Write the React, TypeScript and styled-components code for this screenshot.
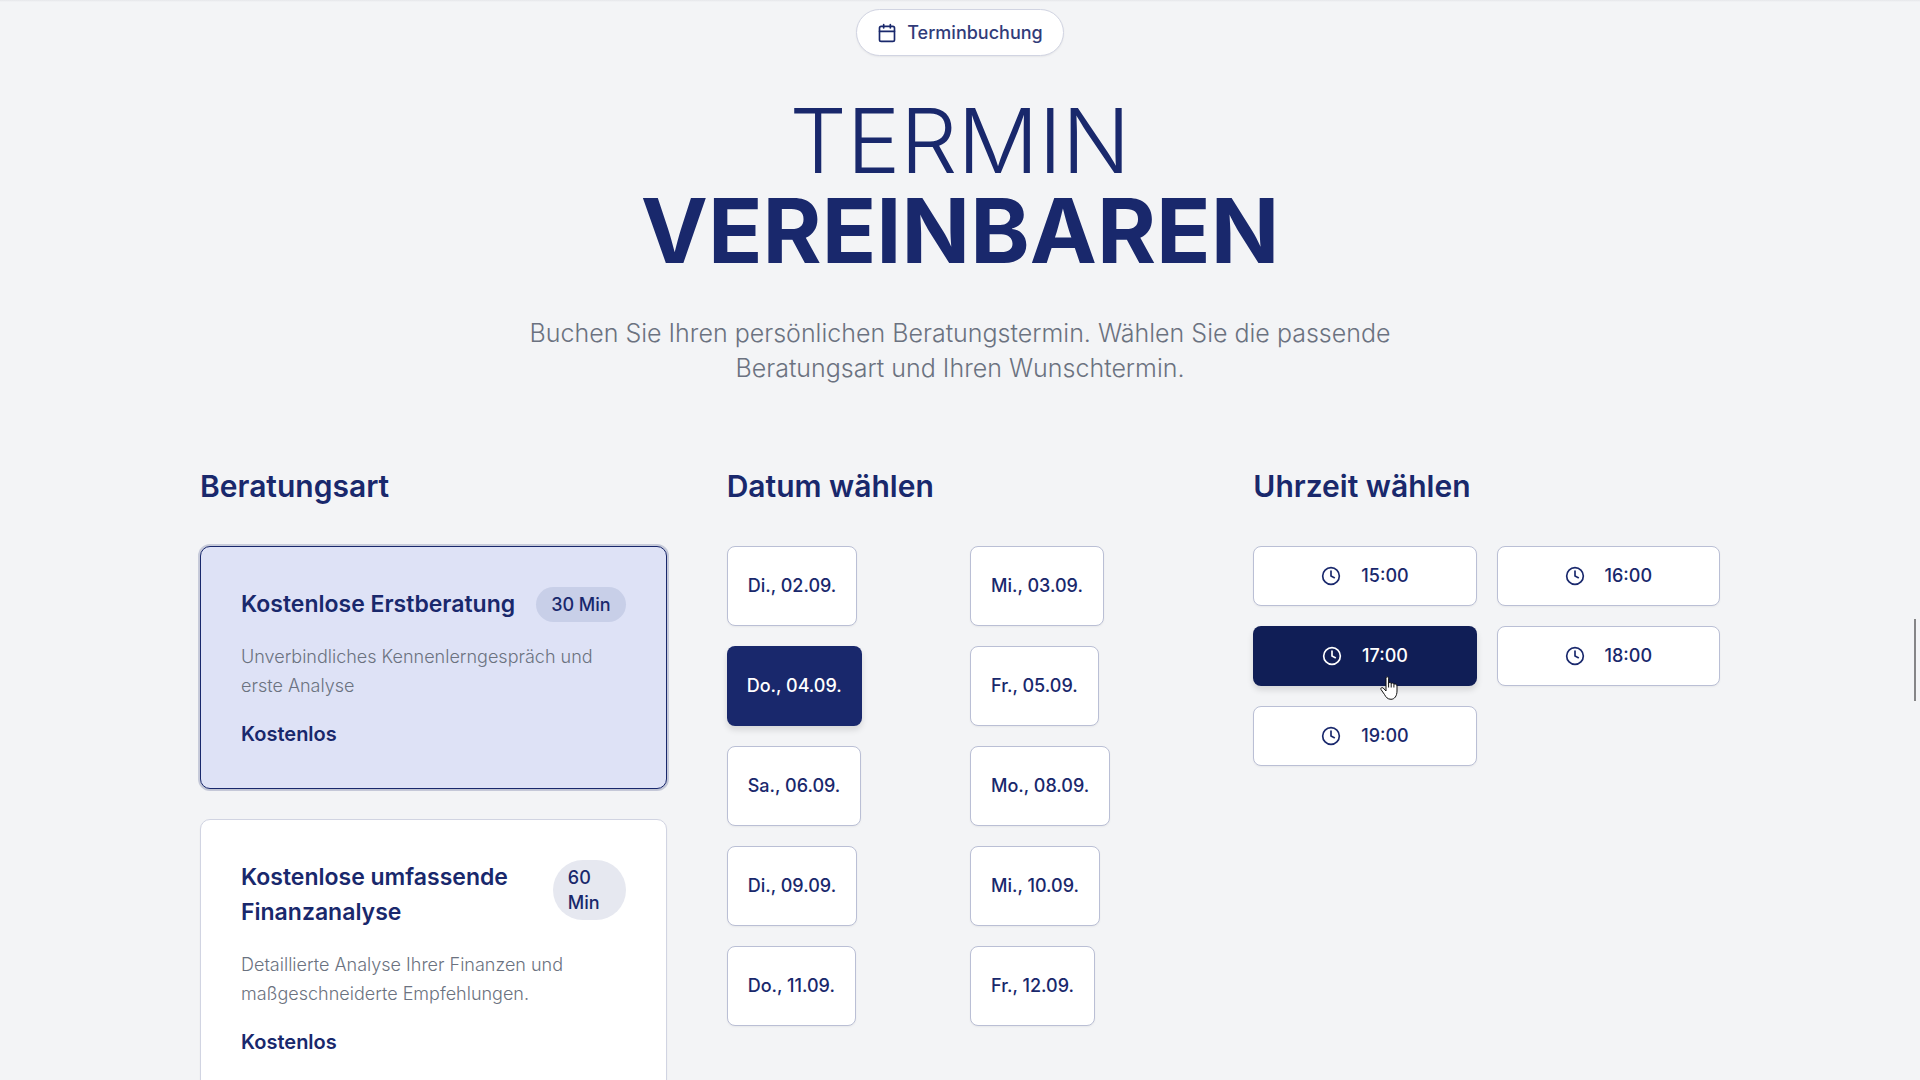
import React, { useState } from "react";
import styled, { createGlobalStyle, css } from "styled-components";
import { Calendar, Clock } from "lucide-react";

const navy = "#19286c";

const GlobalStyle = createGlobalStyle`
  *, *::before, *::after { box-sizing: border-box; }
  body {
    margin: 0;
    background: #f3f4f6;
    color: ${navy};
    font-family: Inter, "Liberation Sans", sans-serif;
  }
  h1, h2, p { margin: 0; }
  button { font: inherit; color: inherit; cursor: pointer; }
`;

const Page = styled.main`
  height: 100vh;
  overflow: hidden;
  background: linear-gradient(#e5e6e9, #f3f4f6) top / 100% 2px no-repeat;
`;

const Container = styled.div`
  max-width: 1600px;
  margin: 0 auto;
  padding: 9px 40px 0;
`;

const Hero = styled.header`
  display: flex;
  flex-direction: column;
  align-items: center;
  text-align: center;
`;

const Pill = styled.div`
  display: flex;
  align-items: center;
  gap: 10px;
  padding: 10px 20px;
  border: 1px solid #d1d4e2;
  border-radius: 999px;
  background: #fff;
  box-shadow: 0 1px 2px rgba(0, 0, 0, 0.06);
  font-size: 18px;
  line-height: 25px;
  font-weight: 500;
`;

const PillText = styled.span`
  opacity: 0.9;
`;

const Title = styled.h1`
  margin-top: 40px;
  font-size: 90px;
  line-height: 90px;
  font-weight: 300;
`;

const TitleLine = styled.span<{ $bold?: boolean }>`
  display: block;
  font-weight: ${(p) => (p.$bold ? 700 : 300)};
`;

const Lead = styled.p`
  max-width: 960px;
  margin-top: 40px;
  color: #6b7280;
  font-size: 25px;
  line-height: 35px;
  font-weight: 300;
`;

const Columns = styled.div`
  display: grid;
  grid-template-columns: repeat(3, minmax(0, 1fr));
  gap: 60px;
  margin-top: 80px;
`;

const ColumnTitle = styled.h2`
  margin-bottom: 40px;
  font-size: 30px;
  line-height: 40px;
  font-weight: 600;
`;

const CardList = styled.div`
  display: grid;
  gap: 30px;
`;

const Card = styled.button<{ $active: boolean }>`
  display: flex;
  flex-direction: column;
  gap: 20px;
  padding: 40px;
  border: 1px solid #d1d4e2;
  border-radius: 10px;
  background: #fff;
  text-align: left;
  box-shadow: 0 1px 2px rgba(0, 0, 0, 0.05);
  ${(p) =>
    p.$active &&
    css`
      border-color: ${navy};
      background: #dee2f6;
      box-shadow: 0 0 0 2px rgba(25, 40, 108, 0.2), 0 1px 2px rgba(0, 0, 0, 0.05);
    `}
`;

const CardHead = styled.span`
  display: flex;
  justify-content: space-between;
  align-items: flex-start;
  width: 100%;
`;

const CardTitle = styled.span`
  font-size: 23px;
  line-height: 35px;
  font-weight: 600;
`;

const Badge = styled.span<{ $active: boolean }>`
  padding: 5px 15px;
  border-radius: 999px;
  background: ${(p) => (p.$active ? "#c8cfe8" : "#e6e8f0")};
  font-size: 18px;
  line-height: 25px;
  font-weight: 500;
`;

const CardText = styled.span`
  color: #6b7280;
  font-size: 18px;
  line-height: 29px;
  font-weight: 300;
`;

const Price = styled.span`
  font-size: 20px;
  line-height: 28px;
  font-weight: 600;
`;

const SlotGrid = styled.div`
  display: grid;
  grid-template-columns: repeat(2, minmax(0, 1fr));
  gap: 20px;
`;

const Slot = styled.button<{ $active: boolean }>`
  position: relative;
  display: flex;
  align-items: center;
  justify-content: center;
  gap: 20px;
  border: 1px solid #babfd5;
  border-radius: 8px;
  background: #fff;
  box-shadow: 0 1px 2px rgba(0, 0, 0, 0.05);
  font-size: 18px;
  line-height: 24px;
  font-weight: 500;
  ${(p) =>
    p.$active &&
    css`
      border: 0;
      background: ${navy};
      color: #fff;
      box-shadow: 0 4px 6px rgba(0, 0, 0, 0.12);
    `}
`;

const DateSlot = styled(Slot)`
  justify-self: start;
  height: 80px;
  padding: 0 20px;
`;

const TimeSlot = styled(Slot)`
  height: 60px;
  ${(p) => p.$active && "background: #101e56;"}
`;

const Pointer = styled.svg`
  position: absolute;
  left: 127px;
  top: 50px;
  width: 18px;
  height: 24px;
`;

const ScrollThumb = styled.div`
  position: fixed;
  top: 619px;
  right: 4px;
  width: 2px;
  height: 82px;
  background: #858587;
`;

const services = [
  {
    title: "Kostenlose Erstberatung",
    duration: "30 Min",
    text: "Unverbindliches Kennenlerngespräch und erste Analyse",
  },
  {
    title: "Kostenlose umfassende Finanzanalyse",
    duration: "60 Min",
    text: "Detaillierte Analyse Ihrer Finanzen und maßgeschneiderte Empfehlungen.",
  },
];

const dates = [
  "Di., 02.09.", "Mi., 03.09.", "Do., 04.09.", "Fr., 05.09.", "Sa., 06.09.",
  "Mo., 08.09.", "Di., 09.09.", "Mi., 10.09.", "Do., 11.09.", "Fr., 12.09.",
];

const times = ["15:00", "16:00", "17:00", "18:00", "19:00"];

export default function App() {
  const [service, setService] = useState(services[0].title);
  const [date, setDate] = useState(dates[2]);
  const [time, setTime] = useState(times[2]);

  return (
    <>
      <GlobalStyle />
      <Page>
        <Container>
          <Hero>
            <Pill>
              <Calendar size={20} strokeWidth={2} aria-hidden />
              <PillText>Terminbuchung</PillText>
            </Pill>
            <Title>
              <TitleLine>TERMIN</TitleLine>
              <TitleLine $bold>VEREINBAREN</TitleLine>
            </Title>
            <Lead>
              Buchen Sie Ihren persönlichen Beratungstermin. Wählen Sie die
              passende Beratungsart und Ihren Wunschtermin.
            </Lead>
          </Hero>
          <Columns>
            <section>
              <ColumnTitle>Beratungsart</ColumnTitle>
              <CardList>
                {services.map((s) => (
                  <Card
                    key={s.title}
                    type="button"
                    $active={s.title === service}
                    aria-pressed={s.title === service}
                    onClick={() => setService(s.title)}
                  >
                    <CardHead>
                      <CardTitle>{s.title}</CardTitle>
                      <Badge $active={s.title === service}>{s.duration}</Badge>
                    </CardHead>
                    <CardText>{s.text}</CardText>
                    <Price>Kostenlos</Price>
                  </Card>
                ))}
              </CardList>
            </section>
            <section>
              <ColumnTitle>Datum wählen</ColumnTitle>
              <SlotGrid>
                {dates.map((d) => (
                  <DateSlot
                    key={d}
                    type="button"
                    $active={d === date}
                    aria-pressed={d === date}
                    onClick={() => setDate(d)}
                  >
                    {d}
                  </DateSlot>
                ))}
              </SlotGrid>
            </section>
            <section>
              <ColumnTitle>Uhrzeit wählen</ColumnTitle>
              <SlotGrid>
                {times.map((t) => (
                  <TimeSlot
                    key={t}
                    type="button"
                    $active={t === time}
                    aria-pressed={t === time}
                    onClick={() => setTime(t)}
                  >
                    <Clock size={20} strokeWidth={2} aria-hidden />
                    {t}
                    {t === time && (
                      <Pointer viewBox="0 0 18 24" aria-hidden>
                        <path
                          d="M6 2.2C6 .3 8.6 .3 8.6 2.2V7.2C9.2 6 11 6.3 11.2 7.6C12 6.6 13.7 7 13.9 8.3C14.8 7.5 17 8 17 10V15C17 20 14.5 23.3 11 23.3C7.5 23.3 5.8 21 4.5 18.5L1 13.5C.3 12.2 1.8 11 3.2 12L6 15Z"
                          fill="#fff"
                          stroke="#111"
                          strokeWidth="1"
                          strokeLinejoin="round"
                        />
                        <path
                          d="M8.6 7V11.5M11.2 7.6V11.5M13.9 8.3V11.5"
                          stroke="#111"
                          strokeWidth="1"
                        />
                      </Pointer>
                    )}
                  </TimeSlot>
                ))}
              </SlotGrid>
            </section>
          </Columns>
        </Container>
        <ScrollThumb aria-hidden />
      </Page>
    </>
  );
}
